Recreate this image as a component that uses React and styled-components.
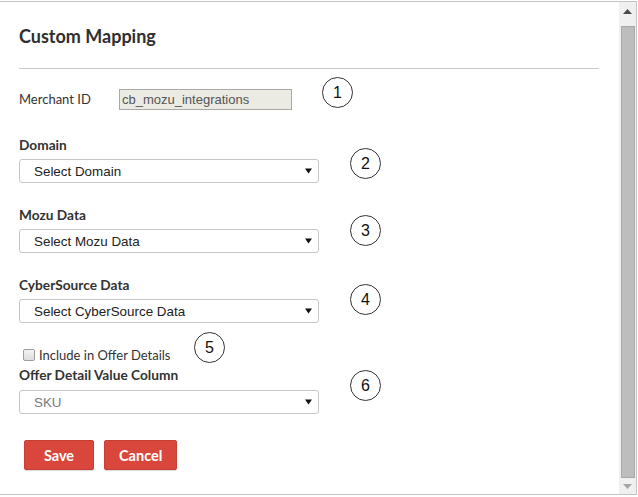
import React from "react";
import styled, { createGlobalStyle } from "styled-components";

const GlobalStyle = createGlobalStyle`
  html, body {
    margin: 0;
    padding: 0;
    background: #fff;
  }
  * {
    box-sizing: border-box;
  }
`;

const fields = [
  { label: "Domain", value: "Select Domain", marker: 2, markerTop: 13 },
  { label: "Mozu Data", value: "Select Mozu Data", marker: 3, markerTop: 10 },
  {
    label: "CyberSource Data",
    value: "Select CyberSource Data",
    marker: 4,
    markerTop: 9,
  },
];

// 사이드 패널 > 커스텀 매핑 폼
const App = () => {
  return (
    <>
      <GlobalStyle />
      <Frame>
        <Main>
          <Title>Custom Mapping</Title>
          <Divider />

          <MerchantRow>
            <InlineLabel>Merchant ID</InlineLabel>
            <ReadOnlyInput>cb_mozu_integrations</ReadOnlyInput>
            <Marker left={303} top={-12}>1</Marker>
          </MerchantRow>

          {fields.map((field) => (
            <Group key={field.label}>
              <Label>{field.label}</Label>
              <SelectBox>
                <span>{field.value}</span>
                <Arrow />
              </SelectBox>
              <Marker left={331} top={field.markerTop}>
                {field.marker}
              </Marker>
            </Group>
          ))}

          <CheckRow>
            <CheckBox />
            <CheckText>Include in Offer Details</CheckText>
            <Marker left={175} top={-13}>5</Marker>
          </CheckRow>

          <Group tight>
            <Label>Offer Detail Value Column</Label>
            <SelectBox muted>
              <span>SKU</span>
              <Arrow />
            </SelectBox>
            <Marker left={331} top={5}>6</Marker>
          </Group>

          <Buttons>
            <Button>Save</Button>
            <Button>Cancel</Button>
          </Buttons>
        </Main>

        <Scrollbar>
          <ScrollButton up>
            <ScrollArrow up />
          </ScrollButton>
          <Thumb />
          <ScrollButton>
            <ScrollArrow />
          </ScrollButton>
        </Scrollbar>
      </Frame>
    </>
  );
};

const Arrow = () => (
  <svg width="7" height="6" viewBox="0 0 7 6">
    <path d="M0 0.5 H7 L3.5 5.5 Z" fill="#111" />
  </svg>
);

const ScrollArrow = ({ up }) => (
  <svg width="9" height="5" viewBox="0 0 9 5">
    {up ? (
      <path d="M0 5 H9 L4.5 0 Z" fill="#4a4a4a" />
    ) : (
      <path d="M0 0 H9 L4.5 5 Z" fill="#a6a6a6" />
    )}
  </svg>
);

const Frame = styled.div`
  display: flex;
  width: 637px;
  height: 494px;
  margin-top: 1px;
  border-top: 1px solid #c4c4c4;
  border-right: 1px solid #c4c4c4;
  border-bottom: 1px solid #c4c4c4;
  background: #fff;
`;
const Main = styled.div`
  flex: 1;
  display: flex;
  flex-direction: column;
  padding: 0 20px 0 19px;
  font-family: "Lato", "Open Sans", sans-serif;
  color: #333;
`;
const Title = styled.h2`
  margin: 22px 0 0 0;
  height: 24px;
  font-size: 18px;
  line-height: 24px;
  font-weight: 700;
  color: #2f2f2f;
`;
const Divider = styled.div`
  margin-top: 20px;
  height: 1px;
  background: #c8c8c8;
`;
const MerchantRow = styled.div`
  position: relative;
  display: flex;
  align-items: center;
  height: 21px;
  margin-top: 20px;
`;
const InlineLabel = styled.span`
  width: 100px;
  font-size: 13px;
  line-height: 21px;
`;
const ReadOnlyInput = styled.div`
  width: 173px;
  height: 21px;
  padding-left: 2px;
  border: 1px solid #a9a9a9;
  background: #ebebe4;
  font-family: "Liberation Sans", Arial, sans-serif;
  font-size: 13px;
  line-height: 19px;
  color: #545454;
`;
const Group = styled.div`
  position: relative;
  display: flex;
  flex-direction: column;
  gap: ${({ tight }) => (tight ? "5px" : "4px")};
  margin-top: ${({ tight }) => (tight ? "0" : "25px")};

  & + & {
    margin-top: 22px;
  }
`;
const Label = styled.label`
  font-size: 13.7px;
  line-height: 20px;
  font-weight: 700;
  color: #333;
`;
const SelectBox = styled.div`
  display: flex;
  align-items: center;
  justify-content: space-between;
  width: 300px;
  height: 24px;
  padding: 0 6px 0 14px;
  border: 1px solid #c6c6c6;
  border-radius: 3px;
  background: #fff;
  font-family: "Liberation Sans", Arial, sans-serif;
  font-size: 13.4px;
  color: ${({ muted }) => (muted ? "#7a7a7a" : "#222")};
`;
const CheckRow = styled.div`
  position: relative;
  display: flex;
  align-items: center;
  height: 20px;
  margin-top: 22px;
  padding-left: 4px;
`;
const CheckBox = styled.span`
  width: 12px;
  height: 12px;
  margin-top: -1px;
  border: 1px solid #9e9e9e;
  border-radius: 2px;
  background: linear-gradient(#f4f4f4, #dedede);
`;
const CheckText = styled.span`
  margin-left: 4px;
  font-size: 13px;
  line-height: 20px;
  color: #333;
`;
const Marker = styled.div`
  position: absolute;
  left: ${({ left }) => left}px;
  top: ${({ top }) => top}px;
  display: flex;
  align-items: center;
  justify-content: center;
  width: 31px;
  height: 31px;
  border: 1px solid #333;
  border-radius: 50%;
  background: #fff;
  font-family: "Liberation Sans", Arial, sans-serif;
  font-size: 16px;
  font-weight: 400;
  color: #111;
`;
const Buttons = styled.div`
  display: flex;
  gap: 10px;
  margin: 26px 0 0 5px;
`;
const Button = styled.button`
  min-width: 70px;
  height: 30px;
  padding: 0 14px;
  border: 1px solid #c63f35;
  border-radius: 2px;
  background: #d9473c;
  box-shadow: 0 1px 1px rgba(0, 0, 0, 0.15);
  font-family: "Lato", "Open Sans", sans-serif;
  font-size: 14.5px;
  font-weight: 700;
  color: #fff;
`;
const Scrollbar = styled.div`
  display: flex;
  flex-direction: column;
  width: 17px;
  background: #f0f0f0;
`;
const ScrollButton = styled.div`
  display: flex;
  justify-content: center;
  align-items: ${({ up }) => (up ? "flex-start" : "center")};
  height: ${({ up }) => (up ? "24px" : "16px")};
  padding-top: ${({ up }) => (up ? "7px" : "0")};
`;
const Thumb = styled.div`
  flex: 1;
  margin: 0 1px 0 2px;
  border: 1px solid #a9a9a9;
  background: #bdbdbd;
`;

export default App;
